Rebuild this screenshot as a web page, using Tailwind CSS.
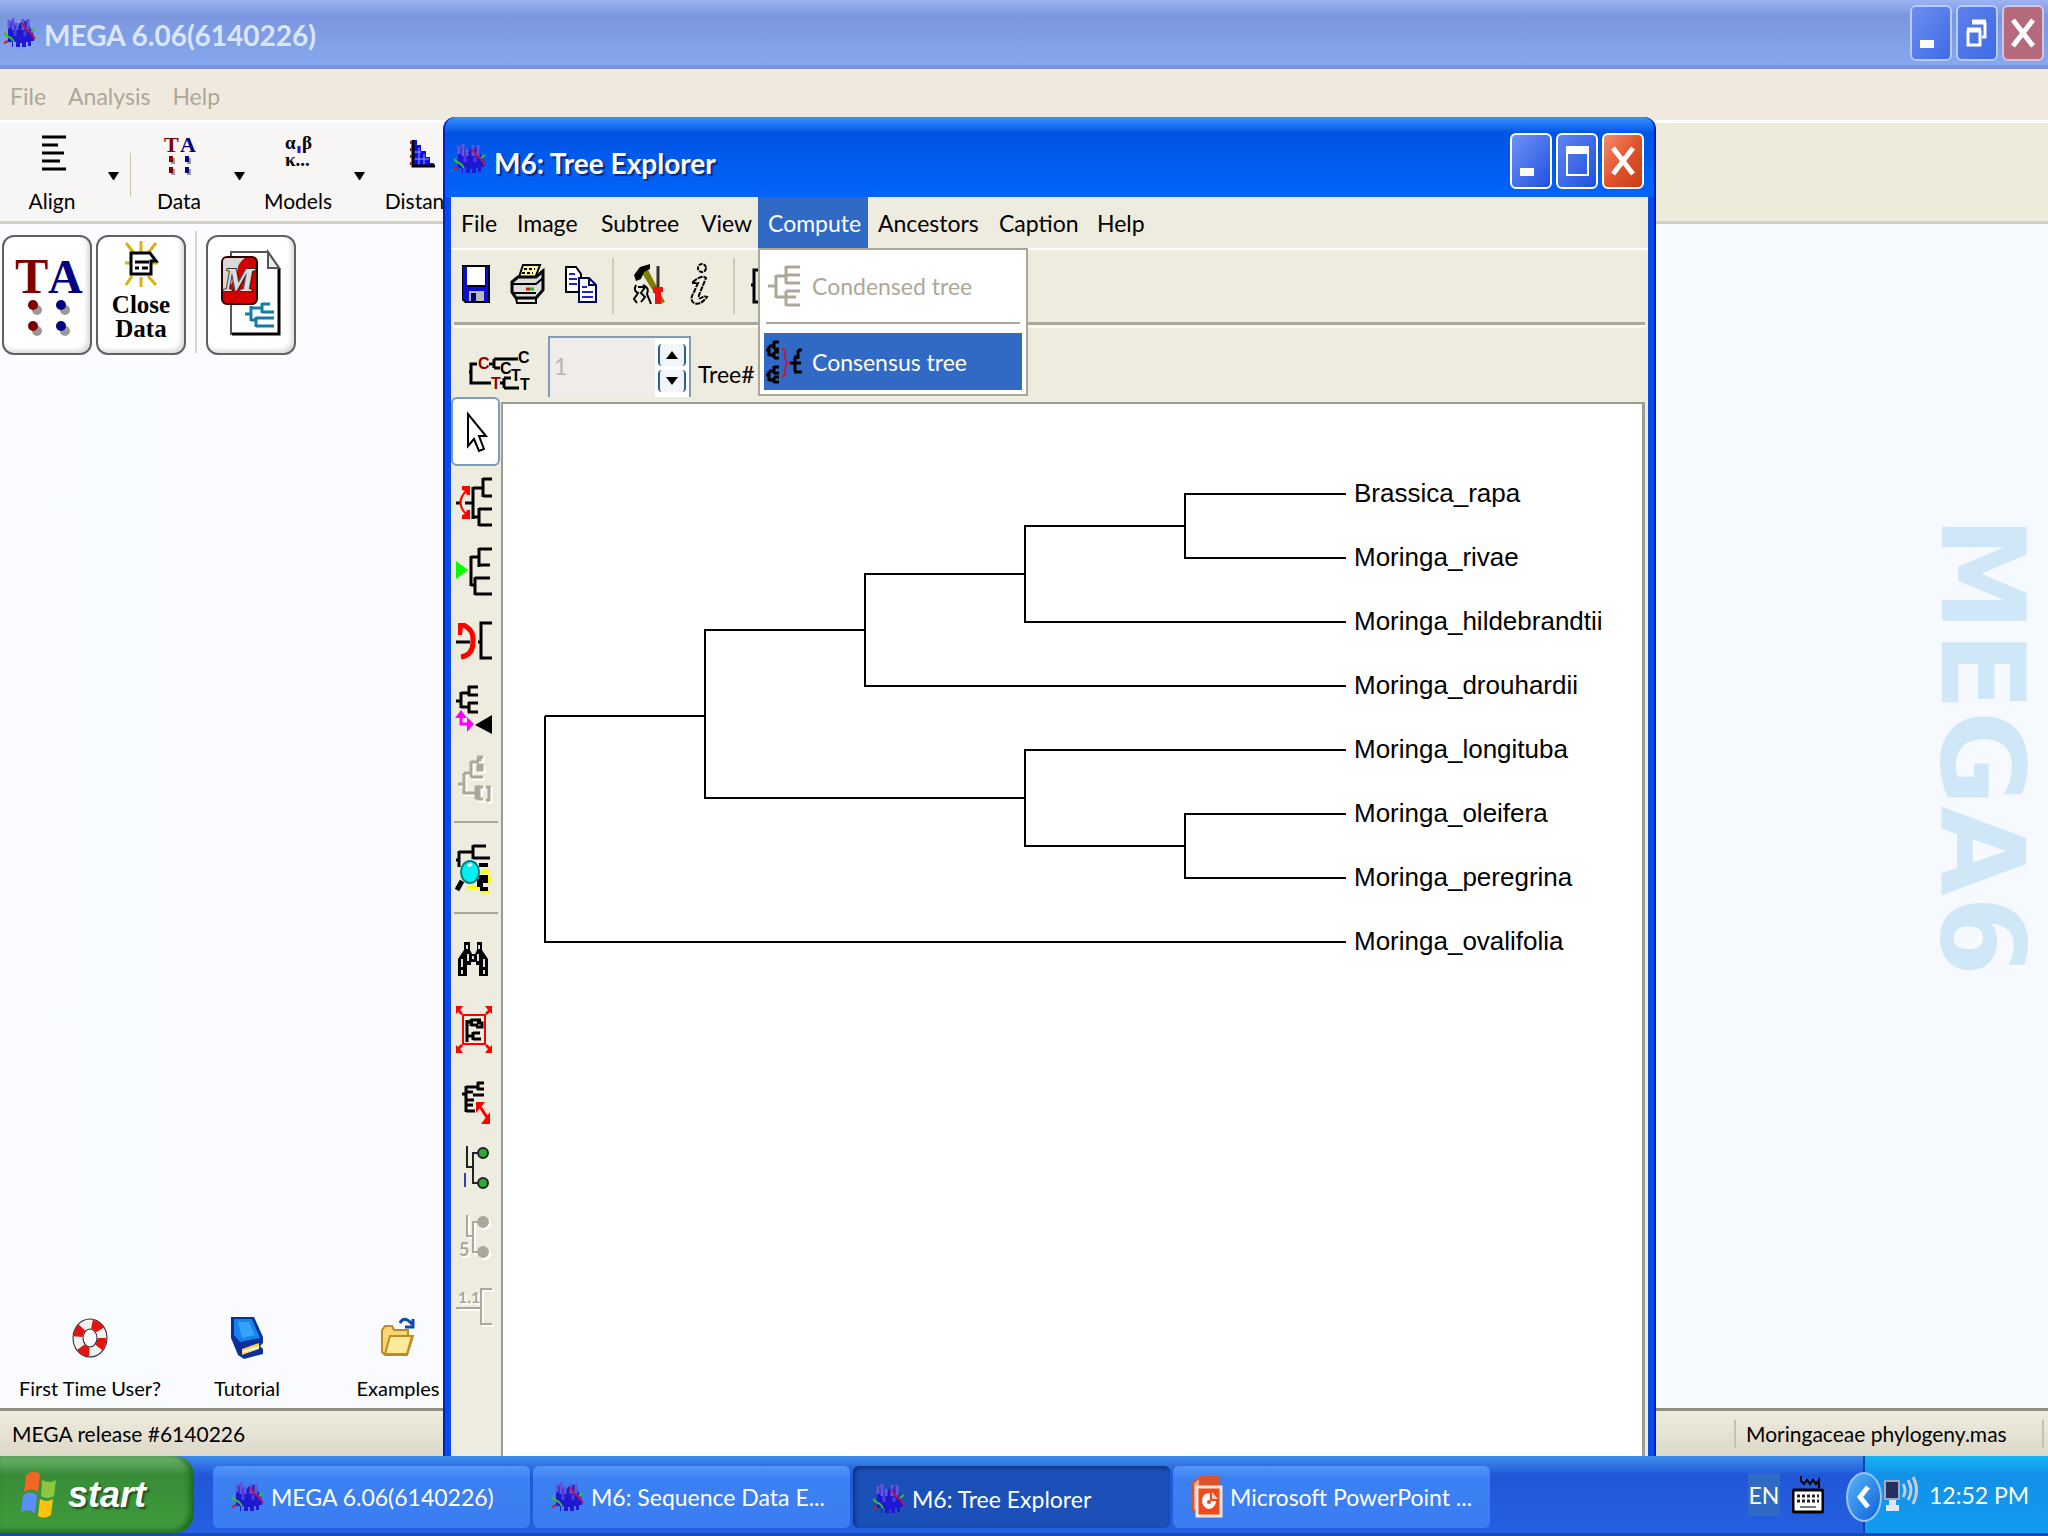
<!DOCTYPE html>
<html lang="en">
<head>
    <meta charset="UTF-8">
    <meta name="viewport" content="width=device-width, initial-scale=1.0">
    <title>MEGA 6.06 | Tree Explorer</title>
    <!-- TailwindCSS -->
    <script src="https://cdn.jsdelivr.net/npm/@tailwindcss/browser@4"></script>
</head>
<body class="h-screen overflow-hidden flex flex-col font-['Lato','Liberation_Sans',sans-serif] text-[23px] leading-8 text-black bg-[#f8faff]">

    <!-- Shared icons -->
    <svg class="hidden">
        <symbol id="mega" viewBox="0 0 32 30">
            <path d="M4 12l3-9h3l3 8 3-6 3-2h4l5 10 2 5v5h-3v5h-3v-4h-2v5h-4v-4h-2v4h-4v-5h-3v5H8v-5H4z" fill="#2018d0"/>
            <path d="M5 2v8M9 0v12M13 5v7M19 1v11M24 1v11" stroke="#6456dc" stroke-width="3"/>
            <path d="M11 12v6M21 13v5" stroke="#4a3ce0" stroke-width="3"/>
            <path d="M18 5l4 6 5 4 4 6" stroke="#b01c50" stroke-width="2" fill="none"/>
            <path d="M0 15l3 3 4 2 3 4M31 11l-4 3" stroke="#35c22c" stroke-width="2" fill="none"/>
            <path d="M0 25l4-2" stroke="#c02020" stroke-width="2"/>
        </symbol>
        <symbol id="cross" viewBox="0 0 24 30">
            <path d="M2 2l20 26M22 2L2 28" stroke="white" stroke-width="5"/>
        </symbol>
    </svg>

    <!-- Main window -->
    <main class="flex-1 min-h-0 flex flex-col relative">
        <!-- Title bar -->
        <header class="h-[69px] shrink-0 flex items-center px-1 gap-2 bg-linear-to-b from-[#9db3f3] via-[#7a96df] via-25% to-[#86a8ee] border-b-4 border-[#7b92dc]">
            <svg class="w-8 h-8"><use href="#mega"/></svg>
            <h1 class="flex-1 pt-1 text-[28px] font-bold text-[#dbe6fc]">MEGA 6.06(6140226)</h1>
            <div class="flex gap-1">
                <button aria-label="Minimize" class="w-[42px] h-[56px] rounded-md border-2 border-[#b9cbf8] bg-linear-to-br from-[#6f8df0] to-[#3c6be6] flex items-end p-2"><span class="w-[14px] h-2 mb-[3px] bg-white"></span></button>
                <button aria-label="Restore" class="w-[42px] h-[56px] rounded-md border-2 border-[#b9cbf8] bg-linear-to-br from-[#5f7fea] to-[#3c6be6] flex items-center justify-center">
                    <svg class="w-[22px] h-7" viewBox="0 0 22 28" fill="none" stroke="white"><path d="M6 3h14" stroke-width="5"/><path d="M19 3v15h-3" stroke-width="3"/><path d="M2 11v15h12V11" stroke-width="3"/><path d="M1 11h14" stroke-width="5"/></svg>
                </button>
                <button aria-label="Close" class="w-[42px] h-[56px] rounded-md border-2 border-[#d3c3e4] bg-[#b56a7c] flex items-center justify-center"><svg class="w-6 h-[30px]"><use href="#cross"/></svg></button>
            </div>
        </header>

        <!-- Menu -->
        <nav class="h-[54px] shrink-0 flex items-center pt-[2px] pl-[10px] gap-[22px] bg-[#f0eade] border-b-3 border-white text-[#aca899]">
            <button>File</button>
            <button>Analysis</button>
            <button>Help</button>
        </nav>

        <!-- Toolbar -->
        <div class="h-[101px] shrink-0 flex bg-linear-to-r from-[#f7f6f5] from-30% to-[#eeebda] to-80% border-b-3 border-[#d2cfc4] text-[21px]">
            <button class="w-[104px] flex flex-col items-center justify-end gap-[6px] pb-1">
                <svg class="w-12 h-11" viewBox="0 0 48 44" stroke="black" stroke-width="3"><path d="M14 2h24M14 10h16M14 18h22M14 26h18M14 34h24"/></svg>
                <span>Align</span>
            </button>
            <button aria-label="Align menu" class="w-[18px] pt-2"><svg class="w-[18px] h-3"><path d="M4 2h11l-5 8h-1z"/></svg></button>
            <span class="w-px h-11 mt-[30px] ml-2 bg-[#c9c5ab]"></span>
            <button class="w-[96px] flex flex-col items-center justify-end gap-[6px] pb-1">
                <svg class="w-12 h-11" viewBox="0 0 48 44" font-family="Liberation Serif" font-weight="bold" font-size="22">
                    <text x="9" y="17" fill="#800000">T</text>
                    <text x="25" y="17" fill="#000080">A</text>
                    <path d="M16 23h4v6h-4zM16 34h4v6h-4zM32 23h4v6h-4zM32 34h4v6h-4z" fill="#999"/>
                    <path d="M14 21h4v6h-4zM14 32h4v6h-4z" fill="#800000"/>
                    <path d="M30 21h4v6h-4zM30 32h4v6h-4z" fill="#000080"/>
                </svg>
                <span>Data</span>
            </button>
            <button aria-label="Data menu" class="w-6 flex justify-center items-center pt-2"><svg class="w-[18px] h-3"><path d="M4 2h11l-5 8h-1z"/></svg></button>
            <button class="w-[94px] flex flex-col items-center justify-end gap-[6px] pb-1">
                <svg class="w-12 h-11" viewBox="0 0 48 44" font-family="Liberation Serif" font-weight="bold" font-size="19">
                    <text x="11" y="14">α</text><text x="28" y="14">β</text>
                    <text x="11" y="31">κ...</text><path d="M25 11v7" stroke="#1515d8" stroke-width="3"/>
                </svg>
                <span>Models</span>
            </button>
            <button aria-label="Models menu" class="w-7 flex justify-center items-center pt-2"><svg class="w-[18px] h-3"><path d="M4 2h11l-5 8h-1z"/></svg></button>
            <button class="w-[104px] flex flex-col items-center justify-end gap-[6px] pb-1">
                <svg class="w-12 h-11" viewBox="0 0 48 44"><path d="M12 5h4v5h4v6h5v6h4v6h4v4H12z" fill="#1010e0"/><path d="M18 13v18M23 19v12M12 17h8M12 24h16" stroke="#8fa0ff"/><path d="M12 5v26h22" stroke="black" stroke-width="3" fill="none"/><path d="M10 6v26" stroke="#b02020" stroke-width="2" stroke-dasharray="3 4"/></svg>
                <span>Distance</span>
            </button>
        </div>

        <!-- Work area -->
        <div class="flex-1 min-h-0 flex flex-col justify-between relative bg-linear-to-r from-[#fafcff] to-[#f6faff]">
            <div class="flex pt-[11px] pl-[2px]">
                <button aria-label="Sequence data" class="w-[90px] h-[120px] rounded-xl border-2 border-[#606060] bg-white shadow-[inset_-3px_-3px_4px_#ddd]">
                    <svg class="w-full h-full" viewBox="0 0 86 116" font-family="Liberation Serif" font-weight="bold" font-size="50">
                        <text x="11" y="56" fill="#800000">T</text>
                        <text x="44" y="56" font-size="48" fill="#000080">A</text>
                        <g fill="#999"><circle cx="33" cy="73" r="5"/><circle cx="33" cy="94" r="5"/><circle cx="61" cy="73" r="5"/><circle cx="61" cy="94" r="5"/></g>
                        <g fill="#800000"><circle cx="29" cy="68" r="5"/><circle cx="29" cy="89" r="5"/></g>
                        <g fill="#000080"><circle cx="57" cy="68" r="5"/><circle cx="57" cy="89" r="5"/></g>
                    </svg>
                </button>
                <button class="w-[90px] h-[120px] ml-1 rounded-xl border-2 border-[#606060] bg-white shadow-[inset_-3px_-3px_4px_#ddd] flex flex-col items-center font-['Liberation_Serif',serif] font-bold text-[25px] leading-6">
                    <svg class="w-10 h-12 mt-1 mb-1" viewBox="0 0 40 48">
                        <path d="M5 2l8 10M20 0v11M35 2l-8 10M4 22h6M30 22h7M5 44l6-9M20 36v10M35 44l-8-9" stroke="#d3b413" stroke-width="3"/>
                        <path d="M10 12h19l6 8h-5v13H10z" fill="white" stroke="black" stroke-width="3"/><path d="M14 21h14M14 27h4M21 27h6" stroke="black" stroke-width="3"/>
                    </svg>
                    <span>Close<br>Data</span>
                </button>
                <span class="w-[2px] h-[122px] -mt-[4px] mx-[9px] bg-[#d5d6c3]"></span>
                <button aria-label="Tree session" class="w-[90px] h-[120px] rounded-xl border-2 border-[#606060] bg-white shadow-[inset_-3px_-3px_4px_#ddd]">
                    <svg class="w-full h-full" viewBox="0 0 86 116">
                        <path d="M23 15h37l11 16v66H23z" fill="white" stroke="#555" stroke-width="2"/>
                        <path d="M71 31v66H24" fill="none" stroke="black" stroke-width="3"/><path d="M60 15v16h11z" fill="#eee" stroke="#555" stroke-width="2"/>
                        <rect x="14" y="20" width="35" height="47" rx="5" fill="#d40000" stroke="#300" stroke-width="2"/>
                        <path d="M15 54V25q0-4 4-4h18q-7 4-8 14-4 14-14 19" fill="#d8d8d8"/>
                        <text x="16" y="54" font-size="34" font-style="italic" font-weight="bold" font-family="Liberation Serif" fill="#ddd" stroke="#333" stroke-width="2" paint-order="stroke">M</text>
                        <path d="M37 77h6M43 69v15M43 71h11M54 66v10M54 67h8M54 75h12M43 83h5M48 80v10M48 81h18M48 89h18" fill="none" stroke="#147ba5" stroke-width="3"/>
                    </svg>
                </button>
            </div>

            <!-- Watermark -->
            <div class="absolute right-2 top-[292px] [writing-mode:vertical-rl] font-['DejaVu_Sans',sans-serif] font-bold text-[116px] leading-none text-[#cfe7f7]">MEGA6</div>

            <div class="flex pb-1 text-[20px]">
                <button class="w-[180px] flex flex-col items-center gap-3">
                    <svg class="w-9 h-11" viewBox="0 0 36 44"><ellipse cx="18" cy="22" rx="12" ry="14" fill="none" stroke="#222" stroke-width="11"/><ellipse cx="18" cy="22" rx="12" ry="14" fill="none" stroke="#f2f2f2" stroke-width="9"/><ellipse cx="18" cy="22" rx="12" ry="14" fill="none" stroke="#e3140f" stroke-width="9" stroke-dasharray="10 11"/></svg>
                    First Time User?
                </button>
                <button class="w-[134px] flex flex-col items-center gap-3">
                    <svg class="w-9 h-11" viewBox="0 0 36 44"><path d="M2 1h23l9 20v6l-3 3 3 3v5l-19 5-6-4L2 22z" fill="#0a2f9a"/><path d="M5 3h18l8 19-20 4L5 19z" fill="#1284ec"/><path d="M9 6h11l6 13-13 3z" fill="#37a2f7"/><path d="M13 33l17-6v6l-17 6z" fill="#ffd24a"/><path d="M14 36l16-5" stroke="white" stroke-width="2"/></svg>
                    Tutorial
                </button>
                <button class="w-[168px] flex flex-col items-center gap-3">
                    <svg class="w-9 h-11" viewBox="0 0 36 44"><path d="M2 14l3-4h7l2 4h14v6h5l-6 19H5l-3-3z" fill="#f7d774" stroke="#c08a20" stroke-width="2"/><path d="M5 38l5-18h22l-5 18z" fill="#fdeb9c" stroke="#c08a20" stroke-width="2"/><path d="M20 7q4-8 12 1M33 3v8h-8" fill="none" stroke="#1148a8" stroke-width="3"/></svg>
                    Examples
                </button>
            </div>
        </div>

        <!-- Status bar -->
        <footer class="h-[48px] shrink-0 flex items-center pl-3 pr-1 border-t-3 border-[#8f8d83] bg-linear-to-b from-[#efece0] to-[#ddd9c8] text-[21px]">
            <span class="flex-1">MEGA release #6140226</span>
            <span class="h-7 border-l-2 border-[#c5c2b2]"></span>
            <span class="w-[306px] pl-[10px] whitespace-nowrap">Moringaceae phylogeny.mas</span>
            <span class="h-7 border-l-2 border-[#c5c2b2]"></span>
        </footer>

        <!-- Tree Explorer window -->
        <section class="absolute left-[443px] top-[117px] bottom-0 right-[392px] flex flex-col rounded-t-xl bg-[#0a4be8] border-x-2 border-[#0320c8]">
            <header class="h-[80px] shrink-0 flex items-center pl-[9px] pr-[10px] pt-1 gap-2 rounded-t-xl bg-linear-to-b from-[#3a92ff] via-[#0054e3] via-20% to-[#0264fb]">
                <svg class="w-8 h-8"><use href="#mega"/></svg>
                <h2 class="flex-1 pt-2 text-[28px] font-bold text-white text-shadow-[2px_2px_1px_#0a2a8a]">M6: Tree Explorer</h2>
                <div class="flex gap-1 pt-1">
                    <button aria-label="Minimize" class="w-[42px] h-[56px] rounded-md border-2 border-white bg-linear-to-br from-[#7191f5] to-[#1c50e0] flex items-end p-2"><span class="w-[14px] h-2 mb-[3px] bg-white"></span></button>
                    <button aria-label="Maximize" class="w-[42px] h-[56px] rounded-md border-2 border-white bg-linear-to-br from-[#6184f2] to-[#1c50e0] flex items-center justify-center"><span class="w-[23px] h-[30px] border-2 border-t-8 border-white"></span></button>
                    <button aria-label="Close" class="w-[42px] h-[56px] rounded-md border-2 border-white bg-linear-to-br from-[#f08d70] via-[#e2532c] to-[#c93c13] flex items-center justify-center"><svg class="w-6 h-[30px]"><use href="#cross"/></svg></button>
                </div>
            </header>

            <div class="flex-1 min-h-0 mx-[6px] flex flex-col bg-[#eeebdf]">
                <nav class="relative h-[53px] shrink-0 flex border-b-2 border-white">
                    <button class="w-[56px] pl-[10px] text-left">File</button>
                    <button class="w-[84px] pl-[10px] text-left">Image</button>
                    <button class="w-[100px] pl-[10px] text-left">Subtree</button>
                    <button class="w-[67px] pl-[10px] text-left">View</button>
                    <button class="w-[110px] pl-[10px] text-left bg-[#316ac5] text-white">Compute</button>
                    <button class="w-[121px] pl-[10px] text-left">Ancestors</button>
                    <button class="w-[98px] pl-[10px] text-left">Caption</button>
                    <button class="w-[64px] pl-[10px] text-left">Help</button>

                    <!-- Compute menu -->
                    <div class="absolute z-10 left-[307px] top-[51px] w-[270px] bg-white border-2 border-[#aca899] p-[4px] flex flex-col">
                        <button disabled class="h-[68px] pb-1 flex items-center gap-[10px] px-[2px] text-[#aca899]">
                            <svg class="w-9 h-11" viewBox="0 0 36 44" fill="none" stroke="#aca899" stroke-width="3"><path d="M2 22h8M10 11v23M10 12h10M10 33h10M20 2v18M20 3h14M20 11h14M20 19h14M20 27v15M20 27h14M20 33h10M20 41h14"/></svg>
                            Condensed tree
                        </button>
                        <hr class="mx-[2px] mb-[9px] border-t-2 border-[#aca899]">
                        <button class="h-[57px] flex items-center gap-[10px] pr-[2px] bg-[#316ac5] text-white">
                            <svg class="w-[38px] h-11" viewBox="0 0 38 44" fill="none" stroke="black" stroke-width="3"><path d="M2 10h3M5 6v10M5 6h5M10 1v8M10 2h5M10 9h5M5 15h5M10 12v6M10 12h5M10 18h5M2 35h3M5 31v10M5 31h5M10 26v8M10 27h5M10 33h5M5 40h5M10 37v6M10 37h5M10 42h5M26 23h4M31 17v15M30 17h4M34 10v9M34 10h4M30 32h8M31 23h6"/><path d="M18 9q4 0 3 7 0 6 3 7-3 1-3 7 1 6-3 7" stroke="#c01848" stroke-width="2"/></svg>
                            Consensus tree
                        </button>
                    </div>
                </nav>

                <!-- Toolbar -->
                <div class="h-[75px] shrink-0 mx-[3px] flex items-center border-b-3 border-[#a9a79b]">
                    <button aria-label="Save" class="w-[44px] pb-1 flex justify-center"><svg class="w-9 h-11" viewBox="0 0 36 44"><path d="M4 3h28v38H7l-3-3z"/><path d="M5 5h4v20h19V5h2v34H8l-3-3z" fill="#0c0cd8"/><path d="M9 5h18v18H9z" fill="white"/><path d="M11 29h15v10H11z" fill="#bbb"/><path d="M13 31h5v8h-5z" fill="#000080"/></svg></button>
                    <button aria-label="Print" class="w-[58px] pb-1 flex justify-center"><svg class="w-9 h-11" viewBox="0 0 36 44"><path d="M10 15l4-12h17l-5 13z" fill="#fff9a0" stroke="black" stroke-width="2"/><path d="M15 7h11M13 11h11" stroke="black" stroke-width="2" stroke-dasharray="3 2"/><path d="M3 20l6-5h18l7-6v19l-7 8H7l-4-6z" fill="#ddd" stroke="black" stroke-width="3"/><path d="M3 22h24l7-6M3 31h24M7 36h20v5H8z" stroke="black" stroke-width="2" fill="none"/><path d="M17 27h4" stroke="#e01010" stroke-width="3"/><path d="M21 27h4" stroke="#10c010" stroke-width="3"/></svg></button>
                    <button aria-label="Copy" class="w-[50px] pb-1 flex justify-center"><svg class="w-9 h-11" viewBox="0 0 36 44" stroke-width="2"><path d="M3 5h10l5 7v18H3z" fill="white" stroke="black"/><path d="M16 16h10l7 7v17H16z" fill="white" stroke="#000060"/><path d="M26 16v7h7" fill="none" stroke="#000060"/><path d="M6 12h6M6 17h8M6 22h8M19 25h5M19 30h11M19 35h11" stroke="#2020e0"/></svg></button>
                    <span class="h-14 w-[2px] mx-[6px] bg-[#cfcbb4]"></span>
                    <button aria-label="Options" class="w-[58px] pb-1 flex justify-center"><svg class="w-9 h-11" viewBox="0 0 36 44"><path d="M9 8l6-4 19 36-4 2z" fill="#808000"/><path d="M3 13L9 5l10-3v5l-6 3-3 7-5 2z"/><path d="M27 4v22" stroke="#333" stroke-width="3"/><path d="M22 25h10v5h-2v12h-6V31h-2z" fill="#f01010"/><path d="M5 23q-3 6 2 8l-4 6 3 4M12 23q7 3 4 9l4 10M7 25h7l-4 6 4 4-4 5" fill="none" stroke="black" stroke-width="2"/></svg></button>
                    <button aria-label="Information" class="w-[44px] pb-1 flex justify-center"><svg class="w-9 h-11" viewBox="0 0 36 44" fill="none" stroke="black" stroke-width="2"><circle cx="20" cy="6" r="4" stroke-dasharray="4 1"/><path d="M11 20q9-8 13-4l-7 17q-1 6 5 1l3 1q-7 9-13 6-5-3 0-11l4-9h-5z" stroke-dasharray="5 1"/></svg></button>
                    <span class="h-14 w-[2px] mx-[11px] bg-[#cfcbb4]"></span>
                    <button aria-label="Tree style"><svg class="w-9 h-11" viewBox="0 0 36 44" fill="none" stroke="black" stroke-width="3"><path d="M14 6H8v15H5M8 21v17h6"/></svg></button>
                </div>

                <!-- Tree selector -->
                <div class="h-[72px] shrink-0 mx-[3px] pl-[14px] pt-[8px] flex border-t-3 border-[#f8f7f0]">
                    <button aria-label="Ancestral states" class="w-[62px] mt-2"><svg class="w-[62px] h-10" viewBox="0 0 62 40" fill="none" stroke="black" stroke-width="3"><path d="M9 13H3v8H1M3 21v11h20M21 13h4M26 8v9M26 8h24M26 17h6M32 32h3M36 27v10M36 27h7M36 37h15"/><g stroke="none" font-family="Liberation Sans" font-weight="bold" font-size="16"><text x="10" y="18" fill="#900000">C</text><text x="23" y="38" fill="#900000">T</text><text x="32" y="23" fill="black">C</text><text x="50" y="12" fill="black">C</text><text x="43" y="30" fill="black">T</text><text x="52" y="39" fill="black">T</text></g></svg></button>
                    <div class="relative ml-[18px] w-[143px] border-2 border-b-0 border-[#7f9db9] flex">
                        <input id="tree-no" type="text" value="1" disabled class="w-full min-w-0 pl-1 pb-1 bg-[#efecea] text-[#b8b4a8]">
                        <div class="flex flex-col gap-1 bg-white p-[3px] pt-[6px]">
                            <button aria-label="Next tree" class="w-7 h-[22px] border-x-2 border-[#2c5f98] rounded flex items-center justify-center bg-[#f2f5fb]"><svg class="w-3 h-2"><path d="M6 0l6 8H0z"/></svg></button>
                            <button aria-label="Previous tree" class="w-7 h-[22px] border-x-2 border-[#2c5f98] rounded flex items-center justify-center bg-[#f2f5fb]"><svg class="w-3 h-2"><path d="M0 0h12l-6 8z"/></svg></button>
                        </div>
                    </div>
                    <label for="tree-no" class="ml-[7px] mt-[22px]">Tree#</label>
                </div>

                <div class="flex-1 min-h-0 flex">
                    <!-- Side tools -->
                    <aside class="w-[50px] shrink-0 flex flex-col items-start">
                        <button aria-label="Select" class="w-[49px] h-[69px] shrink-0 rounded-md border-2 border-[#7c9cbc] bg-white flex items-center"><svg class="w-10 h-[60px]" viewBox="0 0 40 60"><path d="M15 12v32l6-7 5 12 5-2-5-13h7z" fill="white" stroke="black" stroke-width="2"/></svg></button>
                        <button aria-label="Swap subtrees" class="h-[69px] pl-[2px] shrink-0 flex items-center"><svg class="w-10 h-[60px]" viewBox="0 0 40 60" fill="none" stroke="black" stroke-width="3"><path d="M3 32h4M12 32h8M20 16v32M20 17h10M30 7v19M30 8h9M30 25h9M20 46h6M26 37v18M26 38h13M26 54h13"/><path d="M13 20q-11 12 0 23" stroke="red" stroke-width="2"/><path d="M9 15h8v9h-3l-2-4-3-1zM9 48h8v-9h-3l-2 4-3 1z" fill="red" stroke="none"/></svg></button>
                        <button aria-label="Root tree" class="h-[69px] pl-[2px] shrink-0 flex items-center"><svg class="w-10 h-[60px]" viewBox="0 0 40 60" fill="none" stroke="black" stroke-width="3"><path d="M18 16v30M18 17h8M26 8v19M26 9h13M26 25h11M18 45h4M22 37v18M22 38h15M22 54h17"/><path d="M3 21l12 9-12 9z" fill="#0f0" stroke="none"/></svg></button>
                        <button aria-label="Flip subtree" class="h-[69px] pl-[2px] shrink-0 flex items-center"><svg class="w-10 h-[60px]" viewBox="0 0 40 60" fill="none" stroke="black" stroke-width="3"><path d="M3 33h14M25 33h3M39 14H28v35h11"/><path d="M10 16q11 4 10 17 0 13-12 15" stroke="red" stroke-width="5"/><path d="M5 14h8l-3 4-1 8H5z" fill="red" stroke="none"/></svg></button>
                        <button aria-label="Compress subtree" class="h-[69px] pl-[2px] shrink-0 flex items-center"><svg class="w-10 h-[60px]" viewBox="0 0 40 60" fill="none" stroke="black" stroke-width="3"><path d="M3 23h5M8 14v16M8 15h7M16 8v10M15 9h10M15 17h10M8 29h7M16 24v11M15 25h10M15 34h10"/><path d="M8 36v10h9" stroke="#f0f"/><path d="M8 32l6 8H2zM14 39l7 7-7 8z" fill="#f0f" stroke="none"/><path d="M22 47l17-10v19z" fill="black" stroke="none"/></svg></button>
                        <button aria-label="Group taxa" disabled class="h-[69px] pl-[2px] shrink-0 flex items-center"><svg class="w-10 h-[60px] drop-shadow-[2px_2px_0_white]" viewBox="0 0 40 60" fill="none" stroke="#aca899" stroke-width="3"><path d="M5 37h6M11 26v21M11 26h7M18 14v16M18 15h8M18 30h12M24 10h6M24 22h6M11 46h12M24 40h6M24 52h6M33 40h3v13h-3"/><path d="M24 11h4v3h-4zM24 17h6v7h-6zM22 39h5v13h-5z" fill="#aca899" stroke-width="1"/></svg></button>
                        <hr class="w-11 mx-[3px] my-[10px] border-t-2 border-[#aca899]">
                        <button aria-label="Zoom tree" class="h-[69px] pl-[2px] shrink-0 flex items-center"><svg class="w-10 h-[60px]" viewBox="0 0 40 60" fill="none" stroke="black" stroke-width="3"><path d="M3 22h3M6 13v16M6 14h14M20 7v14M20 8h13M20 20h17"/><path d="M28 33h9M37 38l-2 8M14 49h14M28 53h9" stroke="#ff0" stroke-width="4"/><path d="M26 27h9M26 39h9M24 43h11M24 47h6M27 51h8" stroke-width="4"/><ellipse cx="17" cy="34" rx="9" ry="11" fill="#00f0f0" stroke="#008080" stroke-width="2"/><path d="M9 43l-5 9" stroke-width="5"/><path d="M15 28l4-2" stroke="white"/></svg></button>
                        <hr class="w-11 mx-[3px] my-[10px] border-t-2 border-[#aca899]">
                        <button aria-label="Find taxon" class="h-[69px] pl-[2px] shrink-0 flex items-center"><svg class="w-10 h-[60px]" viewBox="0 0 40 60"><path d="M11 13h6v8l2 4h3l2-4v-8h5v8l6 9v17h-9V36h-3v-3h-5v3h-4v11H5V30l6-9z"/><path d="M14 16v4M26 16v4M9 30v8M15 25v7M25 25v7M31 30v8M9 41v4M20 27v3M31 41v4" stroke="#ddd" stroke-width="2"/></svg></button>
                        <button aria-label="Fit to window" class="h-[69px] pl-[2px] shrink-0 flex items-center"><svg class="w-10 h-[60px]" viewBox="0 0 40 60" fill="none" stroke="black" stroke-width="2"><rect x="10" y="17" width="22" height="29" stroke="red"/><path d="M14 22v22M14 24h6M18 21v7M18 22h10M18 27h7M14 38h6M20 34v8M20 35h7M20 41h8M24 25h5v4h-6" stroke-width="3"/><path d="M3 8h7l-3 4 3 3-2 2-3-3-2 2zM39 8h-7l3 4-3 3 2 2 3-3 2 2zM3 55h7l-3-4 3-3-2-2-3 3-2-2zM39 55h-7l3-4-3-3 2-2 3 3 2-2z" fill="red" stroke="none"/></svg></button>
                        <button aria-label="Resize tree" class="h-[69px] pl-[2px] shrink-0 flex items-center"><svg class="w-10 h-[60px]" viewBox="0 0 40 60" fill="none" stroke="black" stroke-width="3"><path d="M9 27h4M13 19v26M13 20h12M25 15v8M24 16h7M24 22h7M13 25h7M20 28h11M13 33h8M13 38h7M13 44h9"/><path d="M26 38l9 14" stroke="red"/><path d="M23 35h9l-9 11zM37 57h-9l9-12z" fill="red" stroke="none"/></svg></button>
                        <button aria-label="Node markers" class="h-[69px] pl-[2px] shrink-0 flex items-center"><svg class="w-10 h-[60px]" viewBox="0 0 40 60" fill="none" stroke="#222" stroke-width="2"><path d="M14 10v21h6M26 17h-6v30h6"/><circle cx="30" cy="17" r="5" fill="#2fa83a"/><circle cx="30" cy="47" r="5" fill="#2fa83a"/><path d="M12 37v14" stroke="#3a3ac0"/></svg></button>
                        <button aria-label="Node statistics" disabled class="h-[69px] pl-[2px] shrink-0 flex items-center"><svg class="w-10 h-[60px] drop-shadow-[2px_2px_0_white]" viewBox="0 0 40 60" fill="none" stroke="#aca899" stroke-width="2"><path d="M14 10v21h6M26 17h-6v30h6"/><circle cx="30" cy="17" r="5" fill="#aca899"/><circle cx="30" cy="47" r="5" fill="#aca899"/><text x="6" y="51" font-size="18" font-weight="bold" fill="#aca899" stroke="none">5</text></svg></button>
                        <button aria-label="Branch lengths" disabled class="h-[69px] pl-[2px] shrink-0 flex items-center"><svg class="w-10 h-[60px] drop-shadow-[2px_2px_0_white]" viewBox="0 0 40 60" fill="none" stroke="#aca899" stroke-width="2"><path d="M3 34h25M39 15H28v35h11"/><text x="5" y="29" font-size="16" font-weight="bold" fill="#aca899" stroke="none">1.1</text></svg></button>
                    </aside>

                    <!-- Tree canvas -->
                    <div class="flex-1 mt-[5px] mr-[3px] overflow-hidden bg-white border-l-2 border-t-2 border-r-3 border-[#9d9b98]">
                        <svg class="w-[1136px] h-[620px]" viewBox="503 404 1136 620" shape-rendering="crispEdges">
                            <g fill="none" stroke="black" stroke-width="2">
                                <path d="M545 716V942H1346M545 716H705"/>
                                <path d="M865 630H705V798H1025"/>
                                <path d="M1025 574H865V686H1346"/>
                                <path d="M1185 526H1025V622H1346"/>
                                <path d="M1346 494H1185V558H1346"/>
                                <path d="M1346 750H1025V846H1185"/>
                                <path d="M1346 814H1185V878H1346"/>
                            </g>
                            <g font-size="26" font-family="Liberation Sans">
                                <text x="1354" y="502">Brassica_rapa</text>
                                <text x="1354" y="566">Moringa_rivae</text>
                                <text x="1354" y="630">Moringa_hildebrandtii</text>
                                <text x="1354" y="694">Moringa_drouhardii</text>
                                <text x="1354" y="758">Moringa_longituba</text>
                                <text x="1354" y="822">Moringa_oleifera</text>
                                <text x="1354" y="886">Moringa_peregrina</text>
                                <text x="1354" y="950">Moringa_ovalifolia</text>
                            </g>
                        </svg>
                    </div>
                </div>
            </div>
        </section>
    </main>

    <!-- Taskbar -->
    <div class="h-[80px] shrink-0 flex items-stretch text-white whitespace-nowrap bg-linear-to-b from-[#3f8cec] via-[#2157d8] via-25% to-[#2460e0] border-b-3 border-[#1a48b8]">
        <button class="w-[194px] flex items-center pl-5 gap-[10px] rounded-r-[20px] bg-linear-to-b from-[#6fb56c] via-[#388c38] via-25% to-[#3f9d3d] shadow-[inset_-4px_-2px_6px_#1e6420]">
            <svg class="w-[38px] h-[48px]" viewBox="0 0 38 48"><path d="M6 4q7-6 14-1l-2 18q-7-5-14 0z" fill="#f26522"/><path d="M22 9q7 4 14 0l-2 16q-7 4-13 0z" fill="#8dc63f"/><path d="M3 24q7-5 14 0l-2 18q-7-5-14-1z" fill="#5b8ef5"/><path d="M20 28q7 4 13 0l-2 16q-7 5-13 1z" fill="#ffc20e"/></svg>
            <span class="text-[36px] leading-[48px] font-['Liberation_Sans',sans-serif] font-bold italic text-shadow-[2px_2px_2px_#1e4d1e]">start</span>
        </button>
        <div class="flex-1 min-w-0 flex gap-[3px] pl-[19px] pt-[10px] pb-[5px]">
            <button class="w-[317px] pl-[19px] flex items-center gap-[7px] rounded-md bg-linear-to-b from-[#5595fa] via-[#3c81f3] via-20% to-[#3a7df2]"><svg class="w-8 h-[30px]"><use href="#mega"/></svg>MEGA 6.06(6140226)</button>
            <button class="w-[317px] pl-[19px] flex items-center gap-[7px] rounded-md bg-linear-to-b from-[#5595fa] via-[#3c81f3] via-20% to-[#3a7df2]"><svg class="w-8 h-[30px]"><use href="#mega"/></svg>M6: Sequence Data E...</button>
            <button class="w-[317px] pl-[20px] pt-1 flex items-center gap-[7px] rounded-md bg-[#1a50b8] shadow-[inset_2px_2px_4px_#0c2f80]"><svg class="w-8 h-[30px]"><use href="#mega"/></svg>M6: Tree Explorer</button>
            <button class="w-[317px] pl-[18px] flex items-center gap-[7px] rounded-md bg-linear-to-b from-[#5595fa] via-[#3c81f3] via-20% to-[#3a7df2]">
                <svg class="w-8 h-[44px]" viewBox="0 0 32 44"><path d="M8 1h21v12H8z" fill="#d9532c"/><path d="M2 8l7-6v36l-7-3z" fill="#f5a58c" stroke="#d9532c" stroke-width="2"/><path d="M6 12h24v29H6z" fill="#f04a1c" stroke="#fbe3da" stroke-width="3"/><path d="M25 26a7 8 0 1 1-6-8v8z" fill="white"/><path d="M21 17v7h6z" fill="#fbd0c0"/><circle cx="18" cy="27" r="2" fill="#f04a1c"/></svg>Microsoft PowerPoint ...
            </button>
        </div>
        <div class="flex items-center gap-3 mr-[39px]">
            <button class="w-8 h-[43px] bg-[#316ac5]">EN</button>
            <button aria-label="Keyboard"><svg class="w-8 h-10" viewBox="0 0 32 40"><path d="M9 1v5l3 3 3-4 3 4 3-4 3 4 3-4v8" fill="none" stroke="black" stroke-width="2"/><rect x="1" y="15" width="30" height="22" rx="2" fill="white" stroke="black" stroke-width="3"/><path d="M5 21h22M5 26h22" stroke="#222" stroke-width="3" stroke-dasharray="3 2"/><path d="M8 32h16" stroke="#777" stroke-width="2"/></svg></button>
        </div>
        <div class="relative w-[185px] pl-[19px] flex items-center gap-[9px] border-l-2 border-[#1042af] bg-linear-to-b from-[#18b5f2] via-[#1290e8] via-25% to-[#109cf0]">
            <button aria-label="Show hidden icons" class="absolute -left-[19px] top-4 w-9 h-[50px] rounded-[50%] border-2 border-[#9cc4f0] bg-linear-to-br from-[#58b4fa] to-[#0c62d8] flex items-center justify-center"><svg class="w-4 h-6" viewBox="0 0 16 24"><path d="M12 2L4 12l8 10" fill="none" stroke="white" stroke-width="5"/></svg></button>
            <svg class="w-9 h-10 shrink-0" viewBox="0 0 36 40"><path d="M1 6h14v18H1z" fill="#26305c" stroke="#a0a8c8" stroke-width="2"/><path d="M5 25h7v5h3v6H2v-6h3z" fill="#e4e4f4"/><path d="M19 9q4 7 0 13M24 5q6 10 0 20M29 2q7 13 0 27" fill="none" stroke="#c8ccd8" stroke-width="3"/></svg>
            <time>12:52 PM</time>
        </div>
    </div>
</body>
</html>
